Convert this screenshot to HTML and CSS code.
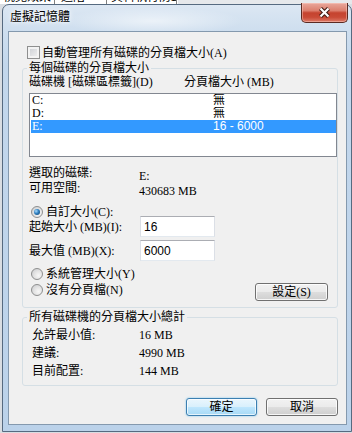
FILE: index.html
```html
<!DOCTYPE html>
<html lang="zh-Hant">
<head>
<meta charset="utf-8">
<title>虛擬記憶體</title>
<link rel="stylesheet" href="styles.css">
</head>
<body>
<div class="screen">
  <div class="parent-tabs">
    <span class="ptab t1">視覺效果</span>
    <span class="ptab t2">進階</span>
    <span class="ptab t3">資料執行防止</span>
  </div>
  <div class="window">
    <div class="titlebar">
      <span class="title">虛擬記憶體</span>
      <span class="close">
        <svg width="13" height="11" viewBox="0 0 13 11">
          <path d="M2.5 1.5 L10.5 9.5 M10.5 1.5 L2.5 9.5" stroke="#3b1710" stroke-width="4.2" fill="none"/>
          <path d="M2.5 1.5 L10.5 9.5 M10.5 1.5 L2.5 9.5" stroke="#ffffff" stroke-width="2.2" fill="none"/>
        </svg>
      </span>
    </div>
    <div class="client">
      <div class="check-row"><span class="checkbox"></span><span>自動管理所有磁碟的分頁檔大小(A)</span></div>
      <fieldset class="group g1">
        <legend>每個磁碟的分頁檔大小</legend>
        <div class="col-head"><span>磁碟機 [磁碟區標籤](D)</span><span>分頁檔大小 (MB)</span></div>
        <div class="listbox">
          <div class="row"><span>C:</span><span>無</span></div>
          <div class="row"><span>D:</span><span>無</span></div>
          <div class="row sel"><span>E:</span><span class="sans">16 - 6000</span></div>
        </div>
        <div class="info">
          <span>選取的磁碟:</span><span class="val">E:</span>
          <span>可用空間:</span><span class="val">430683 MB</span>
        </div>
        <div class="radio-row r-custom"><span class="radio on"></span><span>自訂大小(C):</span></div>
        <div class="field-row f1"><span class="flabel">起始大小 (MB)(I):</span><span class="textbox">16</span></div>
        <div class="field-row f2"><span class="flabel">最大值 (MB)(X):</span><span class="textbox">6000</span></div>
        <div class="radio-row r-sys"><span class="radio"></span><span>系統管理大小(Y)</span></div>
        <div class="last-row">
          <div class="radio-row r-none"><span class="radio"></span><span>沒有分頁檔(N)</span></div>
          <span class="btn set">設定(S)</span>
        </div>
      </fieldset>
      <fieldset class="group g2">
        <legend>所有磁碟機的分頁檔大小總計</legend>
        <div class="totals">
          <span>允許最小值:</span><span>16 MB</span>
          <span>建議:</span><span>4990 MB</span>
          <span>目前配置:</span><span>144 MB</span>
        </div>
      </fieldset>
      <div class="buttons">
        <span class="btn ok">確定</span>
        <span class="btn">取消</span>
      </div>
    </div>
  </div>
</div>
</body>
</html>
```
FILE: styles.css
```css
html, body {
  margin: 0;
  padding: 0;
}
body {
  font-family: "Liberation Serif", "Noto Sans CJK TC", serif;
  font-size: 12px;
  color: #000;
  background: #dfe3e8;
}
.screen {
  width: 352px;
  height: 433px;
  overflow: hidden;
  background: #d9dde2;
}
.parent-tabs {
  height: 4px;
  overflow: hidden;
  display: flex;
  background: linear-gradient(to right, #ffffff 0, #ffffff 178px, #e6e8eb 178px);
}
.ptab {
  box-sizing: border-box;
  height: 13px;
  line-height: 12px;
  margin-top: -9px;
  padding-left: 3px;
  border-right: 1px solid #808080;
  white-space: nowrap;
  overflow: hidden;
}
.t1 { width: 55px; }
.t2 { width: 52px; padding-left: 6px; }
.t3 { width: 70px; padding-left: 4px; }

.window {
  box-sizing: border-box;
  width: 350px;
  height: 428px;
  margin-left: 2px;
  padding: 0 4px 0 5px;
  border: 1px solid #566a80;
  border-radius: 7px 7px 0 0;
  background:
    radial-gradient(ellipse 90px 14px at 150px 16px, rgba(255,255,255,0.55), rgba(255,255,255,0) 100%),
    linear-gradient(180deg, #dce7f3 0px, #cfdfef 24px, #c3d7ec 60px, #bbd2ea 100%);
}
.titlebar {
  height: 26px;
  margin: 0 -4px 0 -5px;
  display: flex;
  justify-content: space-between;
  align-items: flex-start;
}
.title {
  margin: 5px 0 0 7px;
  line-height: 14px;
  color: #000;
  text-shadow: 0 0 6px #ffffff, 0 0 3px #ffffff;
}
.close {
  box-sizing: border-box;
  width: 47px;
  height: 20px;
  margin: -2px 3px 0 0;
  border: 1px solid #5a2a22;
  border-top: none;
  border-radius: 0 0 5px 5px;
  background: linear-gradient(180deg, #e9a89c 0%, #dc7f6e 40%, #c5432f 52%, #c94a36 75%, #dd7b68 100%);
  box-shadow: inset 0 0 0 1px rgba(255, 210, 200, 0.45);
  display: flex;
  align-items: center;
  justify-content: center;
}
.close svg { display: block; }

.client {
  box-sizing: border-box;
  width: 339px;
  height: 394px;
  padding-top: 14px;
  border: 1px solid #8499ae;
  background: #f0f0f0;
}

.check-row {
  display: flex;
  align-items: center;
  gap: 2px;
  height: 13px;
  line-height: 14px;
  margin-left: 18px;
}
.checkbox {
  box-sizing: border-box;
  width: 13px;
  height: 13px;
  border: 1px solid #8e8f8f;
  background: linear-gradient(135deg, #c9ccd1, #f4f4f4);
  box-shadow: inset 0 0 0 2px #f3f3f3;
}

.group {
  box-sizing: border-box;
  width: 316px;
  min-width: 0;
  margin: 2px 0 0 13px;
  padding: 0 0 6px 6px;
  border: 1px solid #d5dfe5;
  border-radius: 3px;
}
.group legend {
  padding: 0 2px;
  margin-left: -2px;
  line-height: 14px;
}
.col-head {
  display: grid;
  grid-template-columns: 155px auto;
  line-height: 14px;
}
.listbox {
  box-sizing: border-box;
  width: 308px;
  height: 64px;
  margin-top: 4px;
  padding: 0 0 0 1px;
  border: 1px solid #828790;
  background: #fff;
}
.row {
  display: grid;
  grid-template-columns: 181px auto;
  height: 13px;
  line-height: 13px;
  padding-left: 1px;
  overflow: hidden;
}
.row.sel {
  background: #3399ff;
  color: #fff;
}
.sans { font-family: "Liberation Sans", "Noto Sans CJK TC", sans-serif; }

.info {
  display: grid;
  grid-template-columns: 110px auto;
  grid-auto-rows: 15px;
  line-height: 14px;
  margin-top: 9px;
}
.info .val { padding-top: 3px; }

.radio-row {
  display: flex;
  align-items: center;
  gap: 3px;
  height: 12px;
  line-height: 14px;
  margin-left: 2px;
}
.radio {
  box-sizing: border-box;
  width: 12px;
  height: 12px;
  border: 1px solid #8e8f8f;
  border-radius: 50%;
  background: radial-gradient(circle at 65% 65%, #f7f7f7 0, #e4e4e4 45%, #c7c9cc 100%);
  display: flex;
  align-items: center;
  justify-content: center;
}
.radio.on::after {
  content: "";
  width: 6px;
  height: 6px;
  border-radius: 50%;
  background: radial-gradient(circle at 35% 35%, #a9dcff 0, #2f7fbf 45%, #0e3c66 100%);
}
.r-custom { margin-top: 10px; }
.field-row {
  display: flex;
  align-items: center;
  height: 21px;
  line-height: 14px;
}
.f1 { margin-top: -2px; }
.f2 { margin-top: 3px; }
.flabel { width: 111px; }
.textbox {
  box-sizing: border-box;
  width: 75px;
  height: 21px;
  padding: 3px 0 0 3px;
  border: 1px solid #dbdfe6;
  border-top-color: #abadb3;
  border-bottom-color: #e3e9ef;
  background: #fff;
  font-family: "Liberation Sans", "Noto Sans CJK TC", sans-serif;
  line-height: 14px;
}
.r-sys { margin-top: 7px; }
.last-row {
  display: flex;
  height: 18px;
  margin-top: 3px;
}
.r-none { margin-top: 1px; }
.btn {
  box-sizing: border-box;
  height: 18px;
  line-height: 16px;
  text-align: center;
  border: 1px solid #707070;
  border-radius: 3px;
  background: linear-gradient(180deg, #f2f2f2 0%, #ebebeb 48%, #dddddd 52%, #cfcfcf 100%);
  box-shadow: inset 0 0 0 1px rgba(255, 255, 255, 0.8);
}
.set {
  width: 73px;
  margin: 0 9px 0 auto;
}

.g2 {
  padding: 0 0 5px 9px;
}
.g2 legend { margin-left: -5px; }
.totals {
  display: grid;
  grid-template-columns: 107px auto;
  grid-auto-rows: 18px;
  line-height: 18px;
  margin-top: 2px;
}

.buttons {
  display: flex;
  justify-content: flex-end;
  gap: 9px;
  margin-top: 12px;
  padding-right: 8px;
}
.buttons .btn { width: 72px; }
.buttons .ok {
  width: 71px;
  border-color: #3c7fb1;
  background: linear-gradient(180deg, #eaf6fd 0%, #d9f0fc 48%, #bee6fd 52%, #a7d9f5 100%);
  box-shadow: inset 0 0 0 1px rgba(255, 255, 255, 0.7), 0 0 2px #6fc3ee;
}
```
